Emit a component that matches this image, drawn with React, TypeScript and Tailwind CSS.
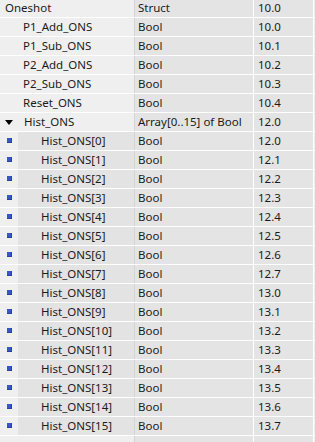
type Row = {
  name: string;
  type: string;
  offset: string;
  level: 0 | 1 | 2;
  kind?: "open" | "leaf";
};

const rows: Row[] = [
  { name: "Oneshot", type: "Struct", offset: "10.0", level: 0 },
  { name: "P1_Add_ONS", type: "Bool", offset: "10.0", level: 1 },
  { name: "P1_Sub_ONS", type: "Bool", offset: "10.1", level: 1 },
  { name: "P2_Add_ONS", type: "Bool", offset: "10.2", level: 1 },
  { name: "P2_Sub_ONS", type: "Bool", offset: "10.3", level: 1 },
  { name: "Reset_ONS", type: "Bool", offset: "10.4", level: 1 },
  { name: "Hist_ONS", type: "Array[0..15] of Bool", offset: "12.0", level: 1, kind: "open" },
  ...Array.from({ length: 16 }, (_, i) => ({
    name: `Hist_ONS[${i}]`,
    type: "Bool",
    offset: `${12 + Math.floor(i / 8)}.${i % 8}`,
    level: 2 as const,
    kind: "leaf" as const,
  })),
];

function NameCell({ row }: { row: Row }) {
  if (row.level === 2) {
    return (
      <div className="flex h-full w-[134px] shrink-0 bg-[#efefef]">
        <div className="flex w-[18px] shrink-0 items-center justify-center">
          <span className="mb-[1px] block h-[5px] w-[5px] bg-[#3a55c8] shadow-[inset_-1px_-1px_0_#2a3f9c]" />
        </div>
        <div className="flex flex-1 items-center bg-[#e3e3e3] pl-[23px]">{row.name}</div>
      </div>
    );
  }
  return (
    <div className="flex h-full w-[134px] shrink-0 items-center bg-[#efefef]">
      {row.kind === "open" ? (
        <span className="ml-[5px] mr-[11px] block h-0 w-0 border-x-[4px] border-t-[5px] border-x-transparent border-t-black" />
      ) : (
        <span className={row.level === 0 ? "w-[5px]" : "w-[23px]"} />
      )}
      {row.name}
    </div>
  );
}

export default function App() {
  return (
    <div
      className="h-[442px] w-[315px] overflow-hidden bg-white text-[11.5px] text-[#1b1b1b]"
      style={{ fontFamily: '"Noto Sans", "Open Sans", sans-serif' }}
    >
      <div className="-mt-[1px] flex flex-col">
        {[...rows, null].map((row, i) => (
          <div key={i} className="flex h-[19px] shrink-0 border-b border-white leading-none">
            {row ? (
              <>
                <NameCell row={row} />
                <div className="w-px shrink-0 bg-[#d4d4d4]" />
                <div className="flex w-[118px] shrink-0 items-center bg-[#e4e4e4] pl-[3px]">{row.type}</div>
                <div className="w-px shrink-0 bg-white" />
                <div className="flex w-[59px] shrink-0 items-center bg-[#e4e4e4] pl-[4px]">{row.offset}</div>
                <div className="w-px shrink-0 bg-white" />
                <div className="flex-1 bg-[#efefef]" />
              </>
            ) : (
              <>
                <div className="w-[134px] shrink-0 bg-[#efefef]" />
                <div className="w-px shrink-0 bg-[#d4d4d4]" />
                <div className="w-[118px] shrink-0 bg-[#e4e4e4]" />
                <div className="w-px shrink-0 bg-white" />
                <div className="w-[59px] shrink-0 bg-[#e4e4e4]" />
                <div className="w-px shrink-0 bg-white" />
                <div className="flex-1 bg-[#efefef]" />
              </>
            )}
          </div>
        ))}
      </div>
    </div>
  );
}
